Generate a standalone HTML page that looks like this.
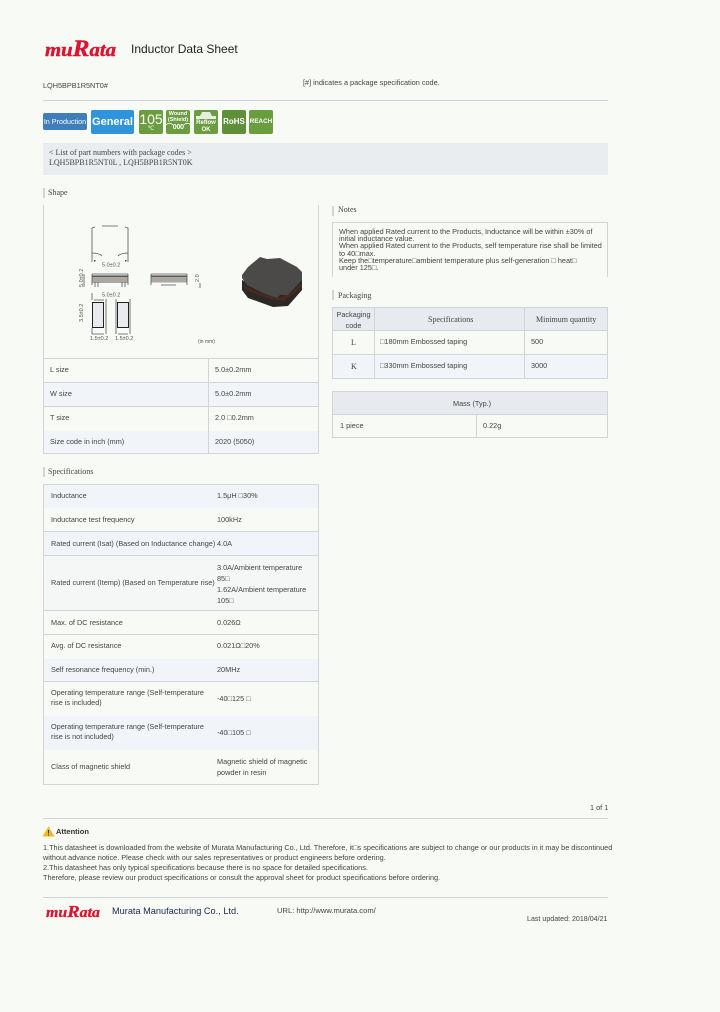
<!DOCTYPE html>
<html><head><meta charset="utf-8"><style>
html,body{margin:0;padding:0;background:#f8faf6}
body{width:720px;height:1012px;position:relative;overflow:hidden;font-family:"Liberation Sans",sans-serif;font-size:7.3px;line-height:10px;color:#444}
.t{position:absolute;white-space:nowrap}
.s{font-family:"Liberation Serif",serif;font-size:8px}
.b{position:absolute;box-sizing:border-box}
.hl{position:absolute;height:1px;background:#d2d5d8}
.v{position:absolute;width:1px;background:#d2d5d8}
.r{position:absolute;background:#f1f4f8}
.g{position:absolute;width:24px;height:24px;border-radius:2px;background:#6a9c40;color:#fff;text-align:center;white-space:nowrap;overflow:hidden}
.head{position:absolute;width:2px;height:10px;background:#d2d5d8}
svg text{font-family:"Liberation Sans",sans-serif}
</style></head><body>
<svg style="position:absolute;left:44px;top:36px" width="74" height="22"><text x="1" y="20" style="font-family:'Liberation Serif',serif" font-weight="bold" font-style="italic" fill="#dc1430" stroke="#dc1430" stroke-width=".45" textLength="71" lengthAdjust="spacingAndGlyphs"><tspan font-size="19">mu</tspan><tspan font-size="23">R</tspan><tspan font-size="19">ata</tspan></text></svg>
<div class="t" style="left:131px;top:42px;font-size:12px;line-height:14px;color:#222">Inductor Data Sheet</div>
<div class="t" style="left:43px;top:81px">LQH5BPB1R5NT0#</div>
<div class="t" style="left:303px;top:78px">[#] indicates a package specification code.</div>
<div class="hl" style="left:43px;top:100px;width:565px;background:#cfd2da"></div>

<div class="b" style="left:43px;top:113px;width:44px;height:17px;background:#3f7ebb;border-radius:2px;color:#fff;text-align:center;line-height:17px;font-size:7.2px;white-space:nowrap">In Production</div>
<div class="b" style="left:91px;top:110px;width:43px;height:24px;background:#2f94dc;border-radius:2px;color:#fff;text-align:center;line-height:25px;font-size:11px;font-weight:bold">General</div>
<div class="g" style="left:139px;top:110px;font-size:14px;line-height:15px;padding-top:2px;height:22px">105<div style="font-size:6px;line-height:5px">℃</div></div>
<div class="g" style="left:166px;top:110px;font-size:5.5px;line-height:6px;font-weight:bold;padding-top:1px;height:23px">Wound<br>(Shield)<div style="font-size:7px;line-height:10px;letter-spacing:-.2px">⌒000⌒</div></div>
<div class="g" style="left:194px;top:110px;font-size:6px;line-height:6.5px;height:14px;padding-top:10px;font-weight:bold">Reflow<br>OK<svg style="position:absolute;left:2px;top:2px" width="20" height="8"><path d="M6 0H14L16 4H20V7H0V4H4Z" fill="#e6eede"/></svg></div>
<div class="g" style="left:222px;top:110px;font-size:8px;line-height:23px;font-weight:bold;background:#5f8f38">RoHS</div>
<div class="g" style="left:249px;top:110px;font-size:6.3px;line-height:24px;font-weight:bold">REACH</div>

<div class="b" style="left:43px;top:143px;width:565px;height:32px;background:#e9edf0"></div>
<div class="t s" style="left:49px;top:148px">&lt; List of part numbers with package codes &gt;</div>
<div class="t s" style="left:49px;top:158px">LQH5BPB1R5NT0L , LQH5BPB1R5NT0K</div>

<div class="head" style="left:43px;top:188px"></div>
<div class="t s" style="left:48px;top:188px">Shape</div>

<div class="v" style="left:43px;top:205px;height:249px"></div>
<div class="v" style="left:318px;top:205px;height:249px"></div>
<div class="hl" style="left:43px;top:358px;width:276px"></div>

<svg style="position:absolute;left:0;top:0" width="720" height="360" fill="none" stroke="#555" stroke-width=".8">
<path d="M92 228V262 M92 228L95 227 M102 226H118 M125 227L128 228V262 M92 253C97 253 100 254 102 256 M128 253C123 253 120 254 118 256"/>
<rect x="94" y="260" width="1.5" height="1.5" fill="#444" stroke="none"/><rect x="125" y="260" width="1.5" height="1.5" fill="#444" stroke="none"/>
<text x="102" y="266.5" font-size="5.5" fill="#555" stroke="none">5.0±0.2</text>
<rect x="92" y="277" width="36" height="6" fill="#aaa89f" stroke="none"/><rect x="92" y="275.5" width="36" height="1.3" fill="#333" stroke="none"/>
<path d="M92 274V285 M128 274V285 M92 274H128 M95 282V287 M98 282V287 M122 282V287 M125 282V287 M84 274V287"/>
<text transform="translate(83,287) rotate(-90)" font-size="5.5" fill="#555" stroke="none">5.0±0.2</text>
<text x="102" y="296.5" font-size="5.5" fill="#555" stroke="none">5.0±0.2</text>
<rect x="151" y="277" width="36" height="5.5" fill="#aaa89f" stroke="none"/><rect x="151" y="275.5" width="36" height="1.3" fill="#333" stroke="none"/>
<path d="M151 274H187 M151 274V285 M187 274V285 M161 285H176 M200 283V288"/>
<text transform="translate(199,282) rotate(-90)" font-size="5.5" fill="#555" stroke="none">2.0</text>
<rect x="92.5" y="302.5" width="11" height="25" fill="#e8ebee" stroke="#222" stroke-width="1"/>
<rect x="117.5" y="302.5" width="11" height="25" fill="#e8ebee" stroke="#222" stroke-width="1"/>
<path d="M92 293V300 M94 300H104 M106 299V334 M116 299V334 M92 328V334 M92 334H104 M118 334H128 M130 299V334"/>
<text transform="translate(83,322) rotate(-90)" font-size="5.5" fill="#555" stroke="none">3.5±0.2</text>
<text x="90" y="340" font-size="5.5" fill="#555" stroke="none">1.5±0.2</text>
<text x="115" y="340" font-size="5.5" fill="#555" stroke="none">1.5±0.2</text>
<text x="198" y="343" font-size="5" fill="#555" stroke="none">(in mm)</text>
<g stroke="none">
<path d="M242 280V290L248 298 273 307 288 306 302 290V278L288 292 263 290Z" fill="#2b2927"/>
<path d="M243 285L262 294 278 298 290 294 302 283V287L284 301 270 299 246 290Z" fill="#4b2a1a"/>
<path d="M260 257 267 259 280 258 297 267 302 272V280L288 295H280L277 298 263 293 247 285 242 278V275L248 267Z" fill="#4c4a48"/>
</g>
</svg>

<div class="r" style="left:44px;top:383px;width:274px;height:23px"></div>
<div class="r" style="left:44px;top:431px;width:274px;height:22px"></div>
<div class="hl" style="left:43px;top:382px;width:276px"></div>
<div class="hl" style="left:43px;top:406px;width:276px"></div>
<div class="hl" style="left:43px;top:453px;width:276px"></div>
<div class="v" style="left:208px;top:358px;height:96px"></div>
<div class="t" style="left:50px;top:365px">L size</div><div class="t" style="left:215px;top:365px">5.0±0.2mm</div>
<div class="t" style="left:50px;top:389px">W size</div><div class="t" style="left:215px;top:389px">5.0±0.2mm</div>
<div class="t" style="left:50px;top:413px">T size</div><div class="t" style="left:215px;top:413px">2.0 □0.2mm</div>
<div class="t" style="left:50px;top:437px">Size code in inch (mm)</div><div class="t" style="left:215px;top:437px">2020 (5050)</div>

<div class="head" style="left:43px;top:467px"></div>
<div class="t s" style="left:48px;top:467px">Specifications</div>

<div class="b" style="left:43px;top:484px;width:276px;height:301px;border:1px solid #d2d5d8"></div>
<div class="r" style="left:44px;top:485px;width:274px;height:23px"></div>
<div class="r" style="left:44px;top:532px;width:274px;height:23px"></div>
<div class="r" style="left:44px;top:556px;width:274px;height:54px;background:#f5f7f7"></div>
<div class="r" style="left:44px;top:659px;width:274px;height:22px"></div>
<div class="r" style="left:44px;top:716px;width:274px;height:34px"></div>
<div class="hl" style="left:43px;top:531px;width:276px"></div>
<div class="hl" style="left:43px;top:555px;width:276px"></div>
<div class="hl" style="left:43px;top:610px;width:276px"></div>
<div class="hl" style="left:43px;top:634px;width:276px"></div>
<div class="hl" style="left:43px;top:681px;width:276px"></div>

<div class="t" style="left:51px;top:491px">Inductance</div><div class="t" style="left:217px;top:491px">1.5μH □30%</div>
<div class="t" style="left:51px;top:515px">Inductance test frequency</div><div class="t" style="left:217px;top:515px">100kHz</div>
<div class="t" style="left:51px;top:539px">Rated current (Isat) (Based on Inductance change)</div><div class="t" style="left:217px;top:539px">4.0A</div>
<div class="t" style="left:51px;top:578px">Rated current (Itemp) (Based on Temperature rise)</div>
<div class="t" style="left:217px;top:562px;line-height:11px">3.0A/Ambient temperature<br>85□<br>1.62A/Ambient temperature<br>105□</div>
<div class="t" style="left:51px;top:618px">Max. of DC resistance</div><div class="t" style="left:217px;top:618px">0.026Ω</div>
<div class="t" style="left:51px;top:641px">Avg. of DC resistance</div><div class="t" style="left:217px;top:641px">0.021Ω□20%</div>
<div class="t" style="left:51px;top:665px">Self resonance frequency (min.)</div><div class="t" style="left:217px;top:665px">20MHz</div>
<div class="t" style="left:51px;top:688px">Operating temperature range (Self-temperature<br>rise is included)</div><div class="t" style="left:217px;top:694px">-40□125 □</div>
<div class="t" style="left:51px;top:722px">Operating temperature range (Self-temperature<br>rise is not included)</div><div class="t" style="left:217px;top:728px">-40□105 □</div>
<div class="t" style="left:51px;top:762px">Class of magnetic shield</div>
<div class="t" style="left:217px;top:757px;line-height:10.5px">Magnetic shield of magnetic<br>powder in resin</div>

<div class="head" style="left:332px;top:206px"></div>
<div class="t s" style="left:338px;top:205px">Notes</div>
<div class="b" style="left:332px;top:222px;width:276px;height:1px;background:#d2d5d8"></div>
<div class="v" style="left:332px;top:222px;height:55px"></div>
<div class="v" style="left:607px;top:222px;height:55px"></div>
<div class="t" style="left:339px;top:228px;line-height:7.2px">When applied Rated current to the Products, Inductance will be within ±30% of<br>initial inductance value.<br>When applied Rated current to the Products, self temperature rise shall be limited<br>to 40□max.<br>Keep the□temperature□ambient temperature plus self-generation □ heat□<br>under 125□.</div>

<div class="head" style="left:332px;top:290px"></div>
<div class="t s" style="left:338px;top:291px">Packaging</div>

<div class="b" style="left:332px;top:307px;width:276px;height:72px;border:1px solid #d2d5d8"></div>
<div class="b" style="left:333px;top:308px;width:274px;height:23px;background:#e7eaee"></div>
<div class="b" style="left:333px;top:355px;width:274px;height:23px;background:#f1f4f8"></div>
<div class="hl" style="left:332px;top:330px;width:276px"></div>
<div class="hl" style="left:332px;top:354px;width:276px"></div>
<div class="v" style="left:374px;top:307px;height:72px"></div>
<div class="v" style="left:524px;top:307px;height:72px"></div>
<div class="t" style="left:333px;top:309px;width:41px;text-align:center;line-height:11px">Packaging<br>code</div>
<div class="t s" style="left:428px;top:315px">Specifications</div>
<div class="t s" style="left:536px;top:315px">Minimum quantity</div>
<div class="t s" style="left:351px;top:338px">L</div><div class="t" style="left:380px;top:337px">□180mm Embossed taping</div><div class="t" style="left:531px;top:337px">500</div>
<div class="t s" style="left:351px;top:362px">K</div><div class="t" style="left:380px;top:361px">□330mm Embossed taping</div><div class="t" style="left:531px;top:361px">3000</div>

<div class="b" style="left:332px;top:391px;width:276px;height:47px;border:1px solid #d2d5d8"></div>
<div class="b" style="left:333px;top:392px;width:274px;height:22px;background:#e7eaee"></div>
<div class="hl" style="left:332px;top:414px;width:276px"></div>
<div class="v" style="left:476px;top:414px;height:24px"></div>
<div class="t" style="left:453px;top:399px">Mass (Typ.)</div>
<div class="t" style="left:340px;top:421px">1 piece</div>
<div class="t" style="left:483px;top:421px">0.22g</div>

<div class="t" style="left:590px;top:803px">1 of 1</div>
<div class="hl" style="left:43px;top:818px;width:565px"></div>
<svg style="position:absolute;left:42px;top:826px" width="13" height="11"><path d="M6.5 .5L12.5 10.5H.5Z" fill="#f0b818"/><path d="M6.5 4V7.5M6.5 8.5V9.5" stroke="#333"/></svg>
<div class="t" style="left:56px;top:827px;font-weight:bold;font-size:7.5px;color:#333">Attention</div>
<div class="t" style="left:43px;top:843px">1.This datasheet is downloaded from the website of Murata Manufacturing Co., Ltd. Therefore, it□s specifications are subject to change or our products in it may be discontinued</div>
<div class="t" style="left:43px;top:853px">without advance notice. Please check with our sales representatives or product engineers before ordering.</div>
<div class="t" style="left:43px;top:863px">2.This datasheet has only typical specifications because there is no space for detailed specifications.</div>
<div class="t" style="left:43px;top:873px">Therefore, please review our product specifications or consult the approval sheet for product specifications before ordering.</div>
<div class="hl" style="left:43px;top:897px;width:565px"></div>
<svg style="position:absolute;left:44px;top:900px" width="60" height="20"><text x="2" y="17" style="font-family:'Liberation Serif',serif" font-weight="bold" font-style="italic" fill="#dc1430" stroke="#dc1430" stroke-width=".3" textLength="54" lengthAdjust="spacingAndGlyphs"><tspan font-size="14.5">mu</tspan><tspan font-size="17">R</tspan><tspan font-size="14.5">ata</tspan></text></svg>
<div class="t" style="left:112px;top:906px;font-size:9.2px;color:#1a2a50">Murata Manufacturing Co., Ltd.</div>
<div class="t" style="left:277px;top:906px;font-size:7.6px">URL: http://www.murata.com/</div>
<div class="t" style="left:527px;top:914px;font-size:7.1px">Last updated: 2018/04/21</div>
</body></html>
